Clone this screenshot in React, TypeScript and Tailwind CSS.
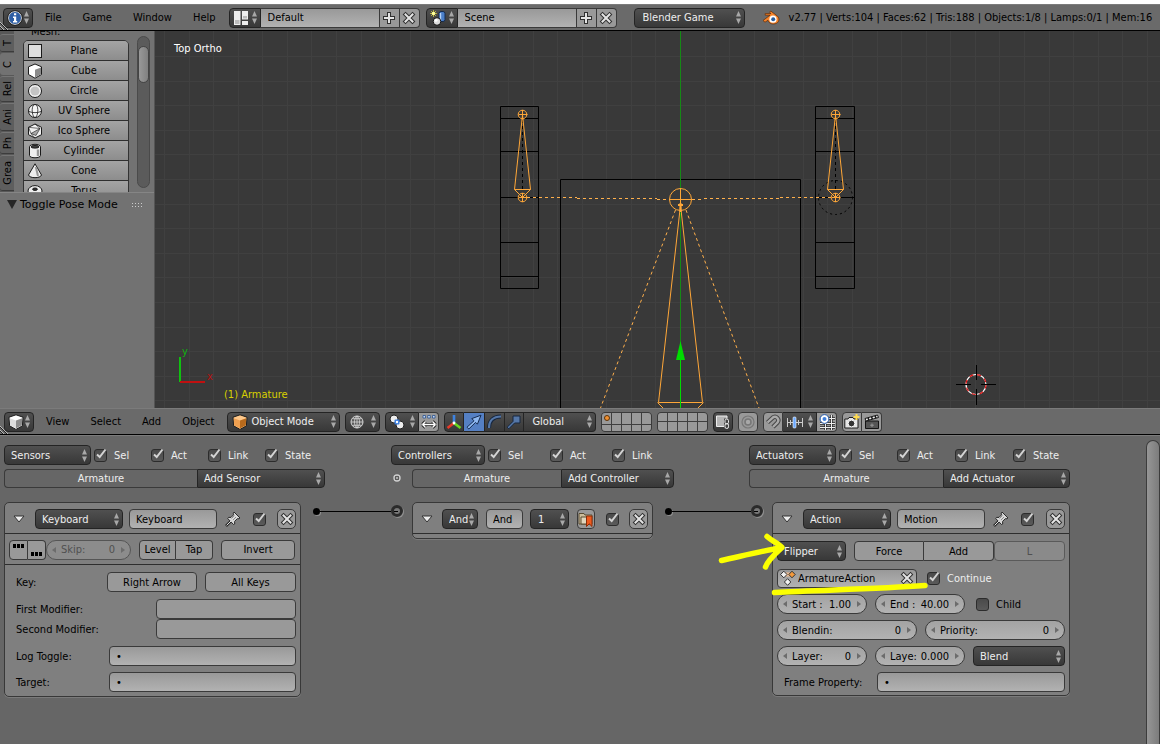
import type { ReactNode } from "react"
import clsx from "clsx"

const dark = "border border-[#242424] bg-linear-to-b from-[#505050] to-[#383838] text-[#eeeeee]"
const light = "border border-[#3a3a3a] bg-[#999999] text-black"
const field = "border border-[#3a3a3a] bg-linear-to-b from-[#999999] to-[#b2b2b2] text-black"

const Arrows = () => (
  <svg width="5" height="13" viewBox="0 0 5 13" className="shrink-0 fill-[#a8a8a8]">
    <path d="M2.5 0 5 5.5H0zM2.5 13 5 7.5H0z" />
  </svg>
)

type SelectProps = { label: string; value: string; className?: string; pad?: string; children?: ReactNode }

const Select = ({ label, value, className, pad = "pl-[6px]", children }: SelectProps) => (
  <div className={clsx("relative h-5 shrink-0 rounded-[4px]", dark, className)}>
    {children}
    <select aria-label={label} className={clsx("block h-full w-full appearance-none bg-transparent outline-none", pad)}>
      <option>{value}</option>
    </select>
    <span className="pointer-events-none absolute inset-y-0 right-[3px] flex items-center">
      <Arrows />
    </span>
  </div>
)

const IconMenu = ({ label, className, children }: { label: string; className?: string; children: ReactNode }) => (
  <button aria-label={label} className={clsx("flex h-5 shrink-0 items-center justify-between px-[3px]", dark, className)}>
    {children}
    <Arrows />
  </button>
)

const Check = ({ label, on = true, className }: { label?: string; on?: boolean; className?: string }) => (
  <label className={clsx("flex shrink-0 items-center gap-[7px]", className)}>
    <span className="relative block size-[13px]">
      <input
        type="checkbox"
        defaultChecked={on}
        aria-label={label ?? "Active"}
        className="peer block size-[13px] appearance-none rounded-[3px] border border-[#2c2c2c] bg-linear-to-b from-[#4a4a4a] to-[#5a5a5a]"
      />
      <svg viewBox="0 0 14 14" width="14" height="14" className="pointer-events-none absolute -top-[2px] left-0 hidden fill-none stroke-[#d4d4d4] stroke-2 peer-checked:block">
        <path d="M3 7.5 5.7 10 11.5 2.5" />
      </svg>
    </span>
    {label && <span>{label}</span>}
  </label>
)

const Cross = () => (
  <svg width="14" height="14" viewBox="0 0 14 14" className="shrink-0">
    <path d="M3.5 3.5 10.5 10.5M10.5 3.5 3.5 10.5" stroke="#303030" strokeWidth="4" strokeLinecap="square" />
    <path d="M3.5 3.5 10.5 10.5M10.5 3.5 3.5 10.5" stroke="#e4e4e4" strokeWidth="2" strokeLinecap="square" />
  </svg>
)

const Plus = () => (
  <svg width="14" height="14" viewBox="0 0 14 14" className="shrink-0">
    <path d="M7 3V11M3 7H11" stroke="#303030" strokeWidth="4" strokeLinecap="square" />
    <path d="M7 3V11M3 7H11" stroke="#e4e4e4" strokeWidth="2" strokeLinecap="square" />
  </svg>
)

const Pin = () => (
  <svg width="16" height="16" viewBox="0 0 16 16" className="shrink-0">
    <path d="M6.5 9.5 1 15" stroke="#2a2a2a" strokeWidth="2.6" />
    <path d="M9 1 15 7 13 8 12.4 7.6 9.6 10.4 9.7 13 8.5 13.5 2.8 7.6 3.5 6.4 6 6.4 8.6 3.8 8.2 2.8z" fill="#d8d8d8" stroke="#2a2a2a" />
    <path d="M6 10 1.6 14.4" stroke="#e4e4e4" />
    <path d="M6.5 7.5 9.5 4.5M8 9 11 6" stroke="#8a8a8a" />
  </svg>
)

const CubeIcon = ({ top = "#ffffff", left = "#dcdcdc", right = "#8b8b8b" }) => (
  <svg width="16" height="16" viewBox="0 0 16 16" className="shrink-0">
    <path d="M8 .8 15 3.2 14.4 11.8 8 15.4 1.6 11.8 1 3.2z" fill={top} stroke="#1c1c1c" />
    <path d="M1.8 4.2 8 6.6V14.6L2.2 11.3z" fill={left} />
    <path d="M14.2 4.2 8 6.6V14.6L13.8 11.3z" fill={right} />
  </svg>
)

const Corner = () => (
  <svg width="8" height="9" className="absolute bottom-0 left-0" stroke="#bbbbbb">
    <path d="M0 1 8 9M0 5 4 9" />
    <path d="M0 2 7 9M0 6 3 9" stroke="#222222" />
  </svg>
)

const Menu = ({ items }: { items: string[] }) => (
  <nav className="flex shrink-0 gap-px">
    {items.map((item) => (
      <button key={item} className="px-[10px] text-black">{item}</button>
    ))}
  </nav>
)

const Datablock = ({ label, value, children }: { label: string; value: string; children: ReactNode }) => (
  <div className="flex shrink-0">
    <IconMenu label={label} className="w-8 rounded-l-[4px]">{children}</IconMenu>
    <input aria-label={`${label} name`} defaultValue={value} className={clsx("h-5 w-[119px] border-l-0 pl-[7px]", field)} />
    <button aria-label={`Add ${label}`} className="flex h-5 w-5 items-center justify-center border border-l-0 border-[#3a3a3a] bg-[#999999]"><Plus /></button>
    <button aria-label={`Delete ${label}`} className="flex h-5 w-5 items-center justify-center rounded-r-[4px] border border-l-0 border-[#3a3a3a] bg-[#999999]"><Cross /></button>
  </div>
)

const InfoHeader = () => (
  <header className="relative flex h-[27px] items-center overflow-hidden border-t border-b border-t-[#7b7b7b] border-b-black bg-[#6a6a6a] pl-[3px] whitespace-nowrap">
    <Corner />
    <IconMenu label="Editor type" className="w-[30px] rounded-[4px]">
      <svg width="16" height="16" viewBox="0 0 16 16">
        <circle cx="8" cy="8" r="6.5" fill="#2f5fa5" stroke="#dddddd" />
        <circle cx="8" cy="8" r="7.4" fill="none" stroke="#1a1a1a" strokeWidth=".8" />
        <path d="M7 3.2H9.2V5.2H7zM6 6.4H9.2V11H10.2V12.6H6V11H7V8H6z" fill="#ffffff" />
      </svg>
    </IconMenu>
    <div className="mr-[3px] ml-[2px]">
      <Menu items={["File", "Game", "Window", "Help"]} />
    </div>
    <div className="flex gap-[6px]">
      <Datablock label="Screen" value="Default">
        <svg width="16" height="16" viewBox="0 0 16 16">
          <path d="M1 1H7.5V15H1zM9 1H15V9.5H9zM9 11H15V15H9z" fill="#eeeeee" />
          <path d="M2 10H6.5V14H2zM10 6H14V8.5H10z" fill="#bbbbbb" />
        </svg>
      </Datablock>
      <Datablock label="Scene" value="Scene">
        <svg width="16" height="16" viewBox="0 0 16 16">
          <path d="M3.5 0V7M0 3.5H7M1 1 6 6M6 1 1 6" stroke="#b5ac3c" />
          <circle cx="3.5" cy="3.5" r="1.8" fill="#ffff99" />
          <rect x="9" y="1.5" width="6" height="10" rx="2" fill="#4b7fc8" stroke="#152b4d" />
          <path d="M10.5 3V10" stroke="#b5d2f7" strokeWidth="1.4" />
          <circle cx="7" cy="11.5" r="3.8" fill="#dddddd" stroke="#151515" />
          <circle cx="6" cy="10.3" r="1.5" fill="#ffffff" />
        </svg>
      </Datablock>
    </div>
    <Select label="Render engine" value="Blender Game" className="ml-[17px] w-[111px]" pad="pl-[8px]" />
    <svg width="18" height="16" viewBox="0 0 18 16" className="ml-[17px] shrink-0">
      <path d="M1 10.5 8 5.2H3.2V3.6H9L7.5 2.3 8.8 1 15.5 6.2C18 8.5 17 12 14.5 13.3 11 15 6.8 13.6 6 10.3L3 12.2z" fill="#f5832a" stroke="#5b2a08" strokeWidth=".7" />
      <circle cx="11" cy="9.2" r="3.6" fill="#ffffff" />
      <circle cx="11.2" cy="9.2" r="2" fill="#2a5e9e" />
    </svg>
    <p className="ml-[9px] text-black">v2.77 | Verts:104 | Faces:62 | Tris:188 | Objects:1/8 | Lamps:0/1 | Mem:16</p>
  </header>
)

const shapes: { name: string; icon: ReactNode }[] = [
  { name: "Plane", icon: <rect x="1.5" y="1.5" width="13" height="13" fill="#dedede" /> },
  {
    name: "Cube",
    icon: (
      <>
        <path d="M8 1 14.5 3.8V11.5L8 15.2 1.5 11.5V3.8z" fill="#ffffff" />
        <path d="M8 6.8 14 4.4V11.2L8 14.6z" fill="#8b8b8b" stroke="none" />
      </>
    ),
  },
  { name: "Circle", icon: <><circle cx="8" cy="8" r="6.5" fill="#f4f4f4" /><circle cx="8" cy="8" r="4.6" fill="#c4c4c4" stroke="none" /></> },
  {
    name: "UV Sphere",
    icon: (
      <>
        <circle cx="8" cy="8" r="6.5" fill="#f4f4f4" />
        <path d="M2 8.5C5 10 11 10 14 8.5M6.5 2C4.5 5 4.8 11 7 14M9.5 2C11.5 5 11.2 11 9 14" fill="none" strokeWidth=".8" />
      </>
    ),
  },
  {
    name: "Ico Sphere",
    icon: (
      <>
        <path d="M8 1 14.5 4.3V11.7L8 15 1.5 11.7V4.3z" fill="#f0f0f0" />
        <path d="M4 10.5 13 5.5 9 12.5z" fill="#a8a8a8" strokeWidth=".6" />
        <path d="M1.5 4.3 13 5.5M1.5 4.3 4 10.5M4 10.5 8 15M8 1 13 5.5" fill="none" strokeWidth=".6" />
      </>
    ),
  },
  {
    name: "Cylinder",
    icon: (
      <>
        <path d="M2.5 3.8C2.5 .5 13.5 .5 13.5 3.8V12.5C13.5 15.5 2.5 15.5 2.5 12.5z" fill="#eeeeee" />
        <ellipse cx="8" cy="3.8" rx="4" ry="1.3" fill="#444444" />
        <path d="M11 6.5V13" stroke="#999999" strokeWidth="2.4" />
      </>
    ),
  },
  {
    name: "Cone",
    icon: (
      <>
        <path d="M8 .8 14.5 12C13.5 15.6 2.5 15.6 1.5 12z" fill="#eeeeee" />
        <path d="M8.8 4 11 13" stroke="#999999" strokeWidth="2" />
      </>
    ),
  },
  {
    name: "Torus",
    icon: (
      <>
        <ellipse cx="8" cy="8" rx="7" ry="5.4" fill="#eeeeee" />
        <ellipse cx="8" cy="6.2" rx="2.4" ry="1.2" fill="#333333" />
      </>
    ),
  },
]

const tabs = [
  { name: "T", height: "h-[18px]" },
  { name: "C", height: "h-[22px]", active: true },
  { name: "Rel", height: "h-[26px]" },
  { name: "Ani", height: "h-[28px]" },
  { name: "Ph", height: "h-[22px]" },
  { name: "Grea", height: "h-[36px]" },
]

const ToolShelf = () => (
  <aside className="flex w-[154px] shrink-0 flex-col bg-[#727272] text-black">
    <div className="flex h-[161px] shrink-0 overflow-hidden">
      <div className="flex w-[14px] flex-col gap-px bg-[#585858] pt-[3px]">
        {tabs.map((tab) => (
          <button
            key={tab.name}
            className={clsx(
              "flex w-full shrink-0 items-center justify-center rounded-l-[3px] border-y",
              tab.height,
              tab.active ? "border-transparent bg-[#727272]" : "border-t-[#757575] border-b-[#3c3c3c] bg-[#5e5e5e]"
            )}
          >
            <span className="rotate-180 [writing-mode:vertical-rl]">{tab.name}</span>
          </button>
        ))}
      </div>
      <div className="ml-[9px] w-[106px]">
        <p className="-mt-[6px] mb-[2px] pl-2 leading-[13px]">Mesh:</p>
        <div className="overflow-hidden rounded-t-[5px] border border-[#333333]">
          {shapes.map((shape) => (
            <button
              key={shape.name}
              className="flex h-5 w-full items-center border-b border-[#2f2f2f] bg-linear-to-b from-[#a4a4a4] to-[#8d8d8d] pr-[3px] pl-[3px]"
            >
              <svg width="16" height="16" viewBox="0 0 16 16" stroke="#1a1a1a" className="shrink-0">
                {shape.icon}
              </svg>
              <span className="flex-1 text-center">{shape.name}</span>
            </button>
          ))}
        </div>
      </div>
      <div className="mt-[5px] ml-[8px] h-[152px] w-[13px] rounded-full border border-[#4a4a4a] bg-[#5b5b5b] pt-[9px]">
        <div className="h-[37px] rounded-full border border-[#444444] bg-linear-to-r from-[#999999] to-[#808080]" />
      </div>
    </div>
    <div className="flex flex-1 items-start border-t border-[#858585]">
      <button className="flex h-[22px] flex-1 items-center gap-[3px] pl-[7px] font-['DejaVu_Sans',sans-serif]">
        <svg width="10" height="9" className="fill-[#262626]">
          <path d="M0 0H10L5 9z" />
        </svg>
        Toggle Pose Mode
      </button>
      <svg width="12" height="22" className="mr-[10px]" stroke="#cccccc" strokeDasharray="1 2">
        <path d="M0 10.5H12M0 13.5H12" />
      </svg>
    </div>
  </aside>
)

const columns = Array.from({ length: 41 }, (_, i) => Math.round(164 + i * 24.57) + 0.5)
const rows = Array.from({ length: 15 }, (_, i) => Math.round(56 + i * 24.6) + 0.5)

const Flipper = ({ x, bone, width }: { x: number; bone: number; width: number }) => (
  <g>
    <path d={`M${x} 106.5h${width}v182h-${width}zM${x} 118.5h${width}m0 33h-${width}m0 46h${width}m0 45h-${width}m0 34h${width}`} stroke="#000000" />
    <path d={`M${bone} 120V190`} stroke="#000000" strokeDasharray="3 3" />
    <g stroke="#ffa738">
      <circle cx={bone} cy="114.5" r="4.3" />
      <circle cx={bone} cy="197.5" r="4.3" />
      <path d={`M${bone} 110v9m-4-4.5h9M${bone} 193v9m-4-4.5h9`} />
      <path d={`M${bone} 115 ${bone - 8} 189.5H${bone + 8}zM${bone - 8} 189.5 ${bone} 197.5 ${bone + 8} 189.5`} />
    </g>
  </g>
)

// Top orthographic view, drawn in the window's own coordinates
const Viewport = () => (
  <main className="min-w-0 flex-1 border-l border-[#555555] bg-[#393939]">
    <svg className="block h-full w-full" viewBox="155 31 1005 377" preserveAspectRatio="xMidYMid slice" fill="none">
      <g stroke="#404040">
        {columns.map((x) => <path key={x} d={`M${x} 31V408`} />)}
        {rows.map((y) => <path key={y} d={`M155 ${y}H1160`} />)}
      </g>
      <path d="M560.5 408V179.5H800.5V408" stroke="#000000" />
      <circle cx="835.5" cy="197.5" r="17" stroke="#000000" strokeDasharray="2 3" />
      <path d="M680.5 31V345" stroke="#158a15" />
      <Flipper x={500.5} bone={522.5} width={38} />
      <Flipper x={815.5} bone={835.5} width={39} />
      <g stroke="#ffb04c">
        <path d="M527 197.5H577M577 198.5H657M657 199.5H669M692 199.5H704M704 198.5H780M780 197.5H831" strokeDasharray="3 3" />
        <path d="M675.5 210 600.5 408M686 210 759 408" strokeDasharray="3 3" />
      </g>
      <g stroke="#ffa738">
        <circle cx="680.5" cy="199.5" r="11" />
        <path d="M680.5 188V211M669 199.5H692" />
        <path d="M680.5 205 658.5 402.5H702.5zM657.5 402.5 663 408M703.5 402.5 698 408" />
        <path d="M678 205H683M680.5 203V212" strokeWidth="2" />
      </g>
      <path d="M680.5 212V345" stroke="#158a15" />
      <path d="M680.5 355V408" stroke="#00dc00" />
      <path d="M680.5 341 685 360H676z" fill="#00dc00" />
      <circle cx="976" cy="384.5" r="10" stroke="#ffffff" strokeWidth="1.2" />
      <circle cx="976" cy="384.5" r="10" stroke="#e01010" strokeWidth="1.2" strokeDasharray="4 4" />
      <path d="M956 384.5H971M981 384.5H996M976.5 365V380M976.5 389V405" stroke="#000000" />
      <path d="M180 357V382" stroke="#10c010" strokeWidth="2" />
      <path d="M180 382H205" stroke="#c01010" strokeWidth="2" />
      <g fontSize="11">
        <text x="182" y="355" fill="#10b010">y</text>
        <text x="207" y="380" fill="#b81010">x</text>
        <text x="174" y="52" fill="#ffffff">Top Ortho</text>
        <text x="224" y="398" fill="#d8d000">(1) Armature</text>
      </g>
    </svg>
  </main>
)

const Tool = ({ label, className, children }: { label: string; className?: string; children: ReactNode }) => (
  <button aria-label={label} className={clsx("flex h-5 w-5 shrink-0 items-center justify-center", className)}>
    <svg width="16" height="16" viewBox="0 0 16 16" fill="none" className="shrink-0">{children}</svg>
  </button>
)

const Layers = ({ label, used }: { label: string; used?: boolean }) => (
  <div className="grid h-5 w-[51px] shrink-0 grid-cols-5 gap-px overflow-hidden rounded-[4px] border border-[#3a3a3a] bg-[#3f3f3f]">
    {Array.from({ length: 10 }, (_, i) => (
      <button key={i} aria-label={`${label} ${i + 1}`} className="flex items-center justify-center bg-[#999999]">
        {used && i === 0 && <span className="size-[6px] rounded-full border border-[#5c3209] bg-[#f09030]" />}
      </button>
    ))}
  </div>
)

const ViewHeader = () => (
  <header className="relative flex h-[27px] items-center gap-[5px] overflow-hidden border-t border-b border-t-[#7b7b7b] border-b-black bg-[#6a6a6a] pl-[4px] whitespace-nowrap">
    <Corner />
    <IconMenu label="Editor type" className="w-[30px] rounded-[4px]"><CubeIcon /></IconMenu>
    <div className="-mr-[2px] -ml-[3px]">
      <Menu items={["View", "Select", "Add", "Object"]} />
    </div>
    <Select label="Mode" value="Object Mode" className="w-[113px]" pad="pl-[23px]">
      <span className="absolute top-px left-[4px]"><CubeIcon top="#ffc88a" left="#f0a050" right="#b86a1c" /></span>
    </Select>
    <IconMenu label="Viewport shading" className="w-[35px] rounded-[4px]">
      <svg width="16" height="16" viewBox="0 0 16 16" stroke="#d8d8d8" fill="none">
        <circle cx="8" cy="8" r="6" fill="#5c5c5c" />
        <path d="M8 2V14M2 8H14M8 2C4.5 5 4.5 11 8 14M8 2C11.5 5 11.5 11 8 14M3.5 4.7H12.5M3.5 11.3H12.5" strokeWidth=".8" />
      </svg>
    </IconMenu>
    <div className="flex">
      <IconMenu label="Pivot point" className="w-[34px] rounded-l-[4px]">
        <svg width="16" height="16" viewBox="0 0 16 16">
          <circle cx="5" cy="5" r="4" fill="#eeeeee" stroke="#222222" />
          <circle cx="11" cy="11" r="4" fill="#eeeeee" stroke="#222222" />
          <rect x="5.5" y="5.5" width="5" height="5" rx="1" fill="#3b7ee0" />
          <circle cx="8" cy="8" r="1.2" fill="#ffffff" />
        </svg>
      </IconMenu>
      <Tool label="Manipulate centers" className="rounded-r-[4px] border border-l-0 border-[#3a3a3a] bg-[#999999]">
        <path d="M2 1.5H4.5V4H2zM6.7 1.5H9.3V4H6.7zM11.5 1.5H14V4H11.5z" fill="#c5daf5" stroke="#28528f" strokeWidth=".8" />
        <path d="M1.5 10.5 4.5 7.5M1.5 10.5 4.5 13.5M1.5 10.5H14.5M14.5 10.5 11.5 7.5M14.5 10.5 11.5 13.5" stroke="#222222" strokeWidth="3.2" />
        <path d="M1.5 10.5 4.5 7.5M1.5 10.5 4.5 13.5M1.5 10.5H14.5M14.5 10.5 11.5 7.5M14.5 10.5 11.5 13.5" stroke="#ffffff" strokeWidth="1.4" />
      </Tool>
    </div>
    <div className="flex">
      <Tool label="Manipulator" className={clsx("rounded-l-[4px]", dark)}>
        <path d="M8 9V1" stroke="#3d82e0" strokeWidth="2.6" />
        <path d="M8 9 1.5 14" stroke="#e83a28" strokeWidth="2.6" />
        <path d="M8 9 14.5 14" stroke="#6bd822" strokeWidth="2.6" />
        <circle cx="8" cy="9" r="1.4" fill="#ffffff" />
      </Tool>
      <Tool label="Translate" className="border-y border-[#242424] bg-[#5580c4]">
        <path d="M1 13.2 8 6.8 5.8 4.6 15 1.2 11.4 10.2 9.6 8.4 2.8 15z" fill="#8fb8f0" stroke="#152b50" />
      </Tool>
      <Tool label="Rotate" className={clsx("border-r-0", dark)}>
        <path d="M2 14C2 7 6 2.5 14 2.5" stroke="#16263f" strokeWidth="4" />
        <path d="M2 14C2 7 6 2.5 14 2.5" stroke="#5577a8" strokeWidth="2.2" />
      </Tool>
      <Tool label="Scale" className={dark}>
        <path d="M1.2 13.2 7 7.4V2H14V9H8.6L2.8 14.8z" fill="#5577a8" stroke="#16263f" />
      </Tool>
      <Select label="Orientation" value="Global" className="w-[72px] rounded-l-none border-l-0" pad="pl-[8px]" />
    </div>
    <Layers label="Layer" used />
    <Layers label="Upper layer" />
    <Tool label="Lock to scene" className={clsx("rounded-[4px]", dark)}>
      <path d="M1.5 2H12V12.5H1.5z" fill="#b5b5b5" stroke="#eeeeee" />
      <path d="M9 4.5H14.5V15H9z" fill="#444444" />
      <rect x="10" y="5" width="3.5" height="5" rx="1.7" stroke="#eeeeee" />
      <rect x="10" y="9.5" width="3.5" height="5" rx="1.7" stroke="#eeeeee" />
    </Tool>
    <Tool label="Proportional editing" className="rounded-[4px] border border-[#3a3a3a] bg-[#999999]">
      <circle cx="8" cy="8" r="6" stroke="#777777" strokeWidth="1.2" />
      <circle cx="8" cy="8" r="3" fill="#a8a8a8" stroke="#777777" strokeWidth="1.6" />
    </Tool>
    <div className="flex">
      <Tool label="Snap" className="rounded-l-[4px] border border-[#3a3a3a] bg-[#999999]">
        <path d="M2.5 8.5 7.5 3.8C11 1 15 5 12.5 8.5L8 13" stroke="#444444" strokeWidth="4.4" />
        <path d="M2.5 8.5 7.5 3.8C11 1 15 5 12.5 8.5L8 13" stroke="#aaaaaa" strokeWidth="2.4" />
      </Tool>
      <IconMenu label="Snap element" className="w-[34px] border-l-0">
        <svg width="18" height="16" viewBox="0 0 18 16">
          <path d="M1 8.5H17M1.5 4V13M4.5 6V11M12.5 6V11M16.5 4V13" stroke="#cccccc" />
          <rect x="7" y="3" width="3" height="11" rx="1" fill="#6aa8ff" stroke="#ffffff" strokeWidth=".6" />
        </svg>
      </IconMenu>
      <Tool label="Snap target" className="rounded-r-[4px] border border-l-0 border-[#3a3a3a] bg-[#999999]">
        <path d="M6.5 7V16M12.5 1V16M1 9.5H16M1 13.5H16M9 4.5H16" stroke="#2a2a2a" strokeWidth="2.4" />
        <path d="M6.5 7V16M12.5 1V16M1 9.5H16M1 13.5H16M9 4.5H16" stroke="#eeeeee" />
        <circle cx="5.5" cy="5" r="4.4" fill="#ffffff" stroke="#2458a8" />
        <circle cx="5.5" cy="5" r="2" fill="#3f7fdc" />
      </Tool>
    </div>
    <div className="flex">
      <Tool label="Render" className="rounded-l-[4px] border border-[#3a3a3a] bg-[#999999]">
        <path d="M.8 5H4L5 3.5H9L10 5H14V14H.8z" fill="#e6e6e6" stroke="#1c1c1c" />
        <circle cx="7.5" cy="9.5" r="3.4" fill="#333333" stroke="#ffffff" />
        <path d="M12.5 0V6M9.5 3H15.5" stroke="#ffdc50" strokeWidth="2" />
      </Tool>
      <Tool label="Render animation" className="rounded-r-[4px] border border-l-0 border-[#3a3a3a] bg-[#999999]">
        <path d="M1.5 7H14.5V14.5H1.5z" fill="#555555" stroke="#151515" />
        <path d="M1 4.5 13.5 1 14.5 3.5 2 7z" fill="#f0f0f0" stroke="#151515" />
        <path d="M4 4 5 6.2M7.5 3 8.5 5.2M11 2 12 4.2" stroke="#151515" strokeWidth="1.6" />
        <path d="M8 9.5V13M6.2 11.2H9.8" stroke="#999999" />
      </Tool>
    </div>
  </header>
)

type BrickHeadProps = { title: string; checks: string[]; add: string; titleWidth: string; checkWidth: string; addWidth: string; state?: boolean }

const BrickHead = ({ title, checks, add, titleWidth, checkWidth, addWidth, state }: BrickHeadProps) => (
  <section className="flex flex-col gap-[4px]">
    <div className="flex h-5 items-center gap-[3px]">
      <Select label={title} value={title} className={titleWidth} />
      <div className="flex">
        {checks.map((check) => <Check key={check} label={check} className={checkWidth} />)}
      </div>
    </div>
    <div className="flex h-[19px] items-center">
      {state && (
        <svg width="21" height="12" viewBox="0 0 21 12" className="shrink-0">
          <circle cx="6" cy="5" r="3" fill="#333333" stroke="#d0d0d0" strokeWidth="1.4" />
          <path d="M6 3.5V6.5M4.5 5H7.5" stroke="#d0d0d0" />
        </svg>
      )}
      <button className="h-[19px] flex-1 rounded-l-[4px] border border-r-0 border-[#3a3a3a] text-center">Armature</button>
      <Select label={add} value={add} className={clsx("h-[19px] rounded-l-none", addWidth)} pad="pl-[6px]" />
    </div>
  </section>
)

const Link = ({ width }: { width: string }) => (
  <div className={clsx("flex h-[18px] shrink-0 items-center pr-[9px] pl-[12px]", width)}>
    <span className="size-[7px] shrink-0 rounded-full bg-black shadow-[1px_1px_0_#909090]" />
    <span className="h-px flex-1 bg-black" />
    <span className="flex size-[12px] shrink-0 items-center rounded-full border-[3px] border-[#2b2b2b] bg-[#777777] shadow-[1px_1px_0_#909090]">
      <span className="h-px w-[4px] bg-black" />
    </span>
  </div>
)

const PanelHead = ({ children }: { children: ReactNode }) => (
  <div className="flex h-[31px] items-center border-b border-[#2e2e2e] pt-[2px] pr-[4px] pl-[8px]">
    <button aria-label="Collapse" className="shrink-0">
      <svg width="12" height="8" viewBox="0 0 12 8">
        <path d="M1 1H11L6 7z" fill="#eeeeee" stroke="#333333" />
      </svg>
    </button>
    {children}
  </div>
)

const Close = () => (
  <button aria-label="Remove" className={clsx("ml-auto flex h-5 w-[19px] shrink-0 items-center justify-center rounded-[5px]", light)}>
    <Cross />
  </button>
)

const panel = "shrink-0 rounded-[5px] border border-[#383838] bg-[#7f7f7f] shadow-[0_1px_0_#7b7b7b]"

const Text = ({ label, value = "", className }: { label: string; value?: string; className?: string }) => (
  <input aria-label={label} defaultValue={value} className={clsx("h-5 min-w-0 shrink-0 rounded-[4px] pl-[6px] outline-none", field, className)} />
)

const Num = ({ label, value, className, off }: { label: string; value: string; className?: string; off?: boolean }) => (
  <label className={clsx("flex h-5 shrink-0 items-center rounded-full border px-[5px]", className, off ? "border-[#555555] bg-[#8c8c8c] text-[#505050]" : "border-[#3a3a3a] bg-linear-to-b from-[#a3a3a3] to-[#b2b2b2] text-black")}>
    <svg width="4" height="6" className="shrink-0 fill-[#6c6c6c]"><path d="M4 0V6L0 3z" /></svg>
    <span className="ml-[5px] shrink-0 whitespace-pre">{label}</span>
    <input defaultValue={value} disabled={off} className="mr-[6px] w-0 min-w-0 flex-1 bg-transparent text-right outline-none" />
    <svg width="4" height="6" className="shrink-0 fill-[#6c6c6c]"><path d="M0 0V6L4 3z" /></svg>
  </label>
)

const KeyboardSensor = () => (
  <section className={clsx("w-[297px] text-black", panel)}>
    <PanelHead>
      <Select label="Sensor type" value="Keyboard" className="ml-[10px] w-[88px]" />
      <Text label="Sensor name" value="Keyboard" className="mr-[8px] ml-[6px] w-[88px]" />
      <Pin />
      <Check className="ml-[12px]" />
      <Close />
    </PanelHead>
    <div className="flex h-[31px] items-center border-b border-[#2e2e2e] pt-px pr-[5px] pl-[4px]">
      <button aria-label="Pulse on true" className={clsx("flex h-5 w-[19px] items-start justify-center rounded-l-[4px] pt-[3px]", light)}>
        <svg width="11" height="5"><path d="M0 0H3V4H0zM4 0H7V4H4zM8 0H11V4H8z" /></svg>
      </button>
      <button aria-label="Pulse on false" className={clsx("flex h-5 w-[18px] items-end justify-center rounded-r-[4px] border-l-0 pb-[3px]", light)}>
        <svg width="11" height="4"><path d="M0 0H3V4H0zM4 0H7V4H4zM8 0H11V4H8z" /></svg>
      </button>
      <Num label="Skip:" value="0" off className="w-[85px]" />
      <button className={clsx("ml-[8px] h-5 w-[37px] rounded-l-[4px]", light)}>Level</button>
      <button className={clsx("h-5 w-[37px] rounded-r-[4px] border-l-0", light)}>Tap</button>
      <button className={clsx("ml-auto h-5 w-[74px] rounded-[4px]", light)}>Invert</button>
    </div>
    <div className="pt-[7px] pr-[4px] pb-[4px] pl-[11px]">
      <div className="flex items-center gap-[8px]">
        <span className="flex-1">Key:</span>
        <button className={clsx("h-5 w-[90px] rounded-[4px]", light)}>Right Arrow</button>
        <button className={clsx("h-5 w-[91px] rounded-[4px]", light)}>All Keys</button>
      </div>
      <div className="mt-[7px] flex items-center justify-between">
        First Modifier:
        <button aria-label="First modifier" className={clsx("h-5 w-[140px] rounded-[4px]", light)} />
      </div>
      <div className="flex items-center justify-between">
        Second Modifier:
        <button aria-label="Second modifier" className={clsx("h-5 w-[140px] rounded-[4px]", light)} />
      </div>
      <div className="mt-[7px] flex items-center justify-between">
        Log Toggle:
        <Text label="Log toggle" value="•" className="w-[187px]" />
      </div>
      <div className="mt-[6px] flex items-center justify-between">
        Target:
        <Text label="Target" value="•" className="w-[187px]" />
      </div>
    </div>
  </section>
)

const AndController = () => (
  <section className={clsx("w-[241px] pb-[4px]", panel)}>
    <PanelHead>
      <Select label="Controller type" value="And" className="ml-[9px] w-[36px]" />
      <Text label="Controller name" value="And" className="ml-[8px] w-[37px]" />
      <Select label="State" value="1" className="ml-[7px] w-[39px]" pad="pl-[7px]" />
      <button aria-label="Priority" className={clsx("ml-[8px] flex h-5 w-[18px] shrink-0 items-center justify-center rounded-[4px]", light)}>
        <svg width="16" height="16" viewBox="0 0 16 16" className="shrink-0">
          <path d="M1 2.5H6L7 4H14V13H1z" fill="#cbbd9c" stroke="#5a4c33" />
          <path d="M3 6H12V13H3z" fill="#e0d6bd" stroke="#5a4c33" />
          <path d="M8.5 5H14V15.5L11.2 12.8 8.5 15.5z" fill="#ee5a1e" stroke="#8c2d08" />
        </svg>
      </button>
      <Check className="ml-[11px]" />
      <Close />
    </PanelHead>
  </section>
)

// Yellow strokes pointing at the play mode and the action name
const Marks = () => (
  <svg width="216" height="70" viewBox="715 530 216 70" className="pointer-events-none absolute top-[27px] -left-[58px]" fill="none" stroke="#fbff00" strokeWidth="5.5" strokeLinecap="round" strokeLinejoin="round">
    <path d="M721.5 560.5C742 556 762 551 782 547.5M767 536.5C772 541 778 543 782 547.5 776 553 768 560 765.5 567" />
    <path d="M774.5 592.5C820 590 875 589 925 585.5" />
  </svg>
)

const ActionActuator = () => (
  <section className={clsx("relative w-[298px] text-black", panel)}>
    <PanelHead>
      <Select label="Actuator type" value="Action" className="ml-[10px] w-[88px]" />
      <Text label="Actuator name" value="Motion" className="mr-[8px] ml-[6px] w-[88px]" />
      <Pin />
      <Check className="ml-[12px]" />
      <Close />
    </PanelHead>
    <div className="flex flex-col gap-[6px] px-[4px] pt-[7px] pb-[3px]">
      <div className="mb-px flex">
        <Select label="Play mode" value="Flipper" className="w-[69px]" />
        <button className={clsx("ml-[8px] h-5 w-[70px] rounded-l-[4px]", light)}>Force</button>
        <button className={clsx("h-5 w-[70px] rounded-r-[4px] border-l-0", light)}>Add</button>
        <button disabled className="h-5 flex-1 rounded-[4px] border border-[#5a5a5a] bg-[#8a8a8a] text-[#505050]">L</button>
      </div>
      <div className="flex h-5 items-center">
        <div className={clsx("flex h-[19px] w-[140px] items-center rounded-[4px] px-[2px]", field)}>
          <svg width="16" height="16" viewBox="0 0 16 16" className="shrink-0" stroke="#333333">
            <path d="M3 4.5H13" stroke="#e8b890" strokeWidth="4" />
            <path d="M3.8 1.2 7 4.5 3.8 7.8 .6 4.5zM7.6 8.7 10.8 12 7.6 15.3 4.4 12z" fill="#f2f2f2" />
            <path d="M12 1.2 15.2 4.5 12 7.8 8.8 4.5z" fill="#f59a3c" />
          </svg>
          <input aria-label="Action" defaultValue="ArmatureAction" className="w-0 flex-1 bg-transparent pl-[2px] outline-none" />
          <button aria-label="Unlink action"><Cross /></button>
        </div>
        <Check label="Continue" className="ml-[10px] text-[#eeeeee]" />
      </div>
      <div className="flex items-center gap-[8px]">
        <Num label="Start : " value="1.00" className="w-[90px]" />
        <Num label="End : " value="40.00" className="w-[90px]" />
        <Check label="Child" on={false} className="ml-[3px]" />
      </div>
      <div className="flex items-center justify-between">
        <Num label="Blendin:" value="0" className="w-[140px]" />
        <Num label="Priority:" value="0" className="w-[140px]" />
      </div>
      <div className="flex items-center gap-[8px]">
        <Num label="Layer:" value="0" className="w-[90px]" />
        <Num label="Laye:" value="0.000" className="w-[90px]" />
        <Select label="Blend mode" value="Blend" className="flex-1" />
      </div>
      <div className="flex items-center justify-between pl-[7px]">
        Frame Property:
        <Text label="Frame property" value="•" className="w-[188px]" />
      </div>
    </div>
    <Marks />
  </section>
)

const LogicEditor = () => (
  <div className="flex flex-1 border-t border-[#7b7b7b] bg-[#666666] text-[#eeeeee]">
    <div className="min-w-0 flex-1 overflow-hidden pt-[9px] pl-[4px] whitespace-nowrap">
      <div className="flex">
        <div className="w-[321px] shrink-0">
          <BrickHead title="Sensors" checks={["Sel", "Act", "Link", "State"]} add="Add Sensor" titleWidth="w-[87px]" checkWidth="w-[57px]" addWidth="w-[128px]" />
        </div>
        <div className="ml-[66px] w-[283px] shrink-0">
          <BrickHead state title="Controllers" checks={["Sel", "Act", "Link"]} add="Add Controller" titleWidth="w-[94px]" checkWidth="w-[62px]" addWidth="w-[113px]" />
        </div>
        <div className="ml-[75px] w-[321px] shrink-0">
          <BrickHead title="Actuators" checks={["Sel", "Act", "Link", "State"]} add="Add Actuator" titleWidth="w-[87px]" checkWidth="w-[58px]" addWidth="w-[127px]" />
        </div>
      </div>
      <div className="mt-[14px] flex items-start">
        <KeyboardSensor />
        <Link width="w-[111px]" />
        <AndController />
        <Link width="w-[119px]" />
        <ActionActuator />
      </div>
    </div>
    <div className="mt-[4px] w-[14px] rounded-t-full border border-b-0 border-[#3c3c3c] bg-linear-to-r from-[#969696] to-[#7c7c7c]" />
  </div>
)

const App = () => {
  return (
    <div className="flex min-h-screen flex-col bg-white pt-1 font-['DejaVu_Sans_Condensed','DejaVu_Sans',sans-serif] text-[11px] leading-[13px]">
      <InfoHeader />
      <div className="flex h-[377px]">
        <ToolShelf />
        <Viewport />
      </div>
      <ViewHeader />
      <LogicEditor />
    </div>
  )
}

export default App
